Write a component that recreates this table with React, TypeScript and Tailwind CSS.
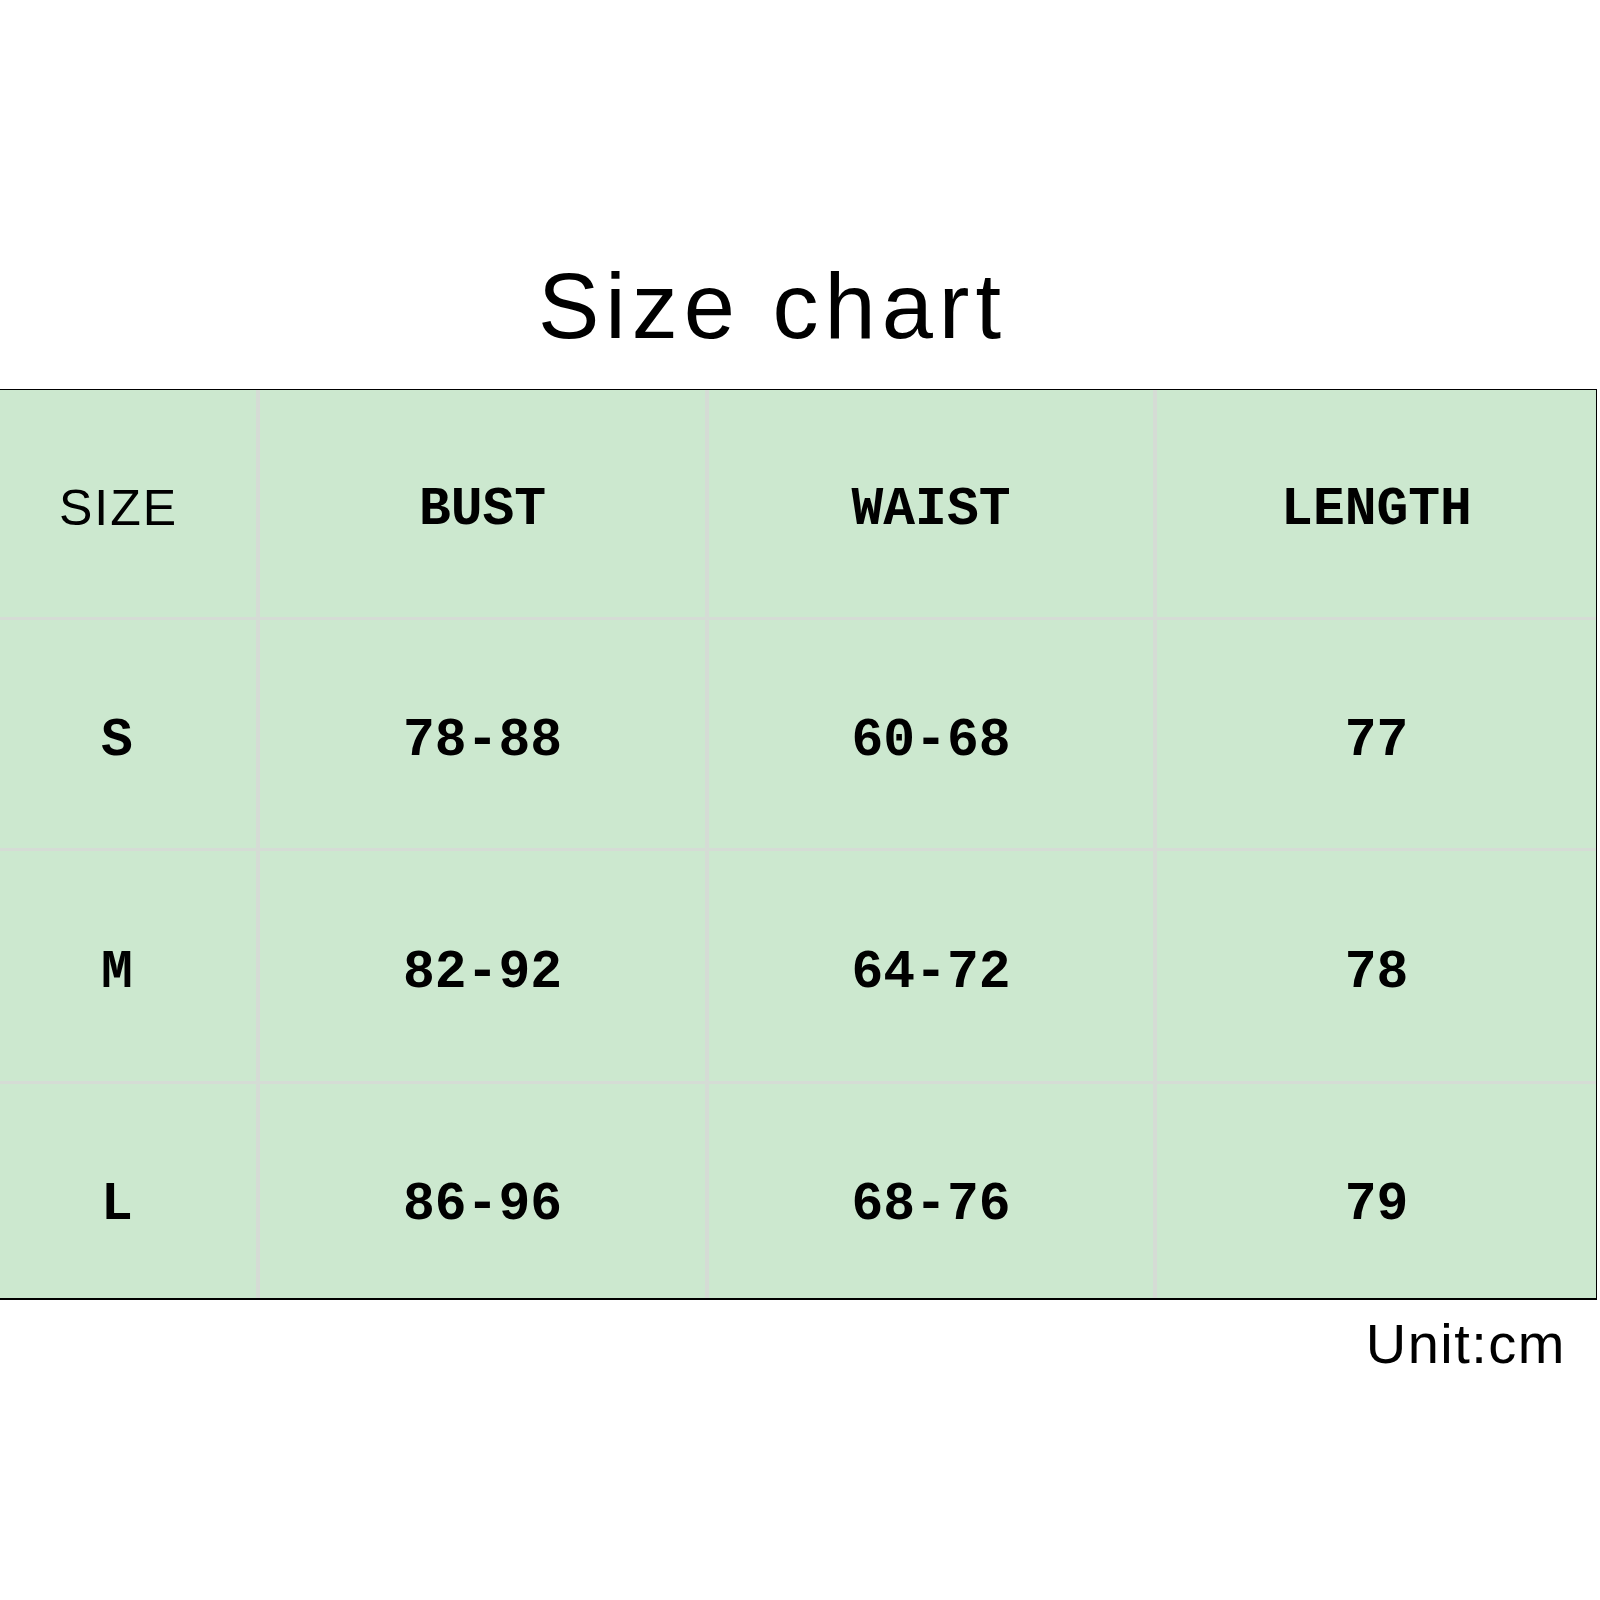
import React from "react";

const rows = [
  ["S", "78-88", "60-68", "77"],
  ["M", "82-92", "64-72", "78"],
  ["L", "86-96", "68-76", "79"],
];

const mono = { fontFamily: '"Liberation Mono", "Courier New", monospace' } as React.CSSProperties;

function Cell({ children, first, last }: { children: React.ReactNode; first?: boolean; last?: boolean }) {
  return (
    <div
      className={
        "bg-[#cce8cf] flex items-center justify-center font-bold text-[53px] text-black " +
        (first ? "pr-[22px] " : "") +
        (last ? "pt-[30px]" : "pt-[15px]")
      }
      style={mono}
    >
      {children}
    </div>
  );
}

export default function App() {
  return (
    <div className="w-[1600px] h-[1600px] bg-white" style={{ fontFamily: '"Liberation Sans", Arial, sans-serif' }}>
      <div className="h-[260px]" />
      <div className="pl-[538px] text-[92px] leading-none tracking-[6px] text-black">Size chart</div>
      <div className="h-[37px]" />
      <div className="w-[1597px] border-t border-r border-b-2 border-black bg-[#d5dcd5]">
        <div className="grid grid-cols-[256px_445px_444px_439px] grid-rows-[227px_228px_230px_214px] gap-x-[4px] gap-y-[3px]">
          <div className="bg-[#cce8cf] flex items-center justify-center pr-[19px] pt-[10px] text-[50px] tracking-[2px] text-black">SIZE</div>
          <Cell>BUST</Cell>
          <Cell>WAIST</Cell>
          <Cell>LENGTH</Cell>
          {rows.map((r, i) => (
            <React.Fragment key={r[0]}>
              <Cell first last={i === 2}>{r[0]}</Cell>
              <Cell last={i === 2}>{r[1]}</Cell>
              <Cell last={i === 2}>{r[2]}</Cell>
              <Cell last={i === 2}>{r[3]}</Cell>
            </React.Fragment>
          ))}
        </div>
      </div>
      <div className="mt-[16px] flex justify-end pr-[34px] text-[56px] leading-none tracking-[1.5px] text-black">Unit:cm</div>
    </div>
  );
}
